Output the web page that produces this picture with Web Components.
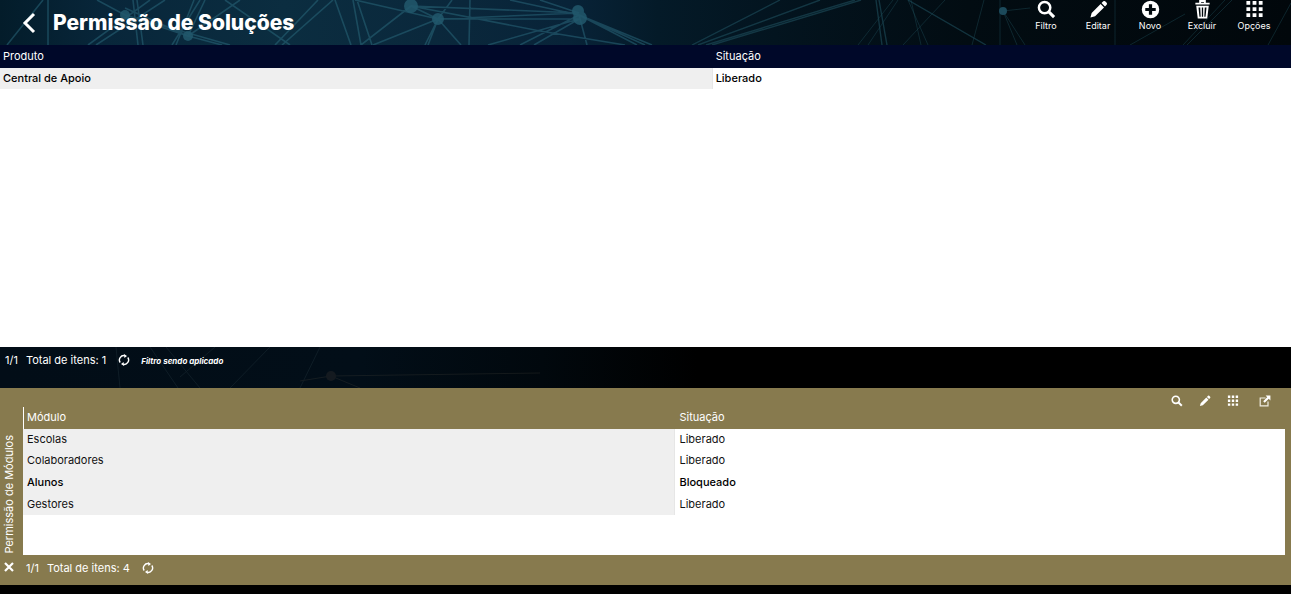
<!DOCTYPE html>
<html lang="pt-BR">
  <head>
    <meta charset="UTF-8" />
    <meta name="viewport" content="width=device-width, initial-scale=1" />
    <title>Permissão de Soluções</title>
    <style>
      body {
        margin: 0;
        background: #000;
        color: #fff;
        font-family: Inter, "Open Sans", sans-serif;
        font-size: 11px;
      }
    </style>
  </head>

  <body>
    <permission-page></permission-page>

    <template id="page--content">
      <style>
        :host {
          display: flex;
          flex-direction: column;
          box-sizing: border-box;
          min-height: 100vh;
          padding-bottom: 9px;
        }
        data-grid.main {
          flex: 1;
          --head-bg: #000829;
          --head-height: 23px;
          --cell-pad: 3px;
        }
        data-grid.modules {
          --head-height: 22px;
          --cell-pad: 4px;
          --head-line: 1px solid #fff;
          min-height: 148px;
        }
        .hint {
          font-size: 8px;
          font-style: italic;
          font-weight: 700;
        }
      </style>
      <app-header>
        <span slot="title">Permissão de Soluções</span>
        <tool-button icon="search">Filtro</tool-button>
        <tool-button icon="pencil">Editar</tool-button>
        <tool-button icon="plus">Novo</tool-button>
        <tool-button icon="trash">Excluir</tool-button>
        <tool-button icon="grid">Opções</tool-button>
      </app-header>
      <data-grid class="main" split="55.2"></data-grid>
      <page-footer art>
        <span slot="page">1/1</span>
        <span slot="total">Total de itens: 1</span>
        <span class="hint">Filtro sendo aplicado</span>
      </page-footer>
      <detail-panel>
        <span slot="title">Permissão de Módulos</span>
        <data-grid class="modules" split="51.7"></data-grid>
        <page-footer slot="footer">
          <span slot="page">1/1</span>
          <span slot="total">Total de itens: 4</span>
        </page-footer>
      </detail-panel>
    </template>

    <template id="header--content">
      <style>
        :host {
          display: flex;
          align-items: center;
          position: relative;
          height: 45px;
          overflow: hidden;
          background: linear-gradient(90deg, #031c2a 0%, #08263a 8%, #0b2d40 22%, #0a273b 36%, #082338 44%, #041a28 51%, #03141f 60%, #020c12 75%, #01070b 100%);
        }
        .art {
          position: absolute;
          left: 0;
          top: 0;
          width: 100%;
          height: 100%;
        }
        .back {
          position: relative;
          display: flex;
          padding: 0;
          margin-left: 22px;
          border: 0;
          background: none;
          color: #fff;
        }
        h1 {
          position: relative;
          flex: 1;
          margin: 0 0 0 17px;
          font-size: 21px;
          line-height: 24px;
          font-weight: 800;
        }
        nav {
          position: relative;
          align-self: flex-start;
          display: flex;
          margin-right: 11px;
        }
      </style>
      <svg class="art" viewBox="0 0 1291 45" preserveAspectRatio="xMinYMin slice" aria-hidden="true">
        <g fill="none" stroke="#2b6c7f" stroke-width="1.6" opacity=".5">
          <path d="M7 45L43 0M48 0V45M97 0L125 15L230 45M88 45L150 0M96 45L165 0M133 0L138 45M137 0L143 45M125 15L188 36L205 0M200 0L172 45M194 0L176 45M188 36L240 0M188 36L125 8M188 36L222 45M275 45L318 0M282 45L333 0M225 0L290 45" />
          <path d="M335 0L351 45M353 0L361 45M357 0L372 45M355 0L438 19M411 6L438 19M411 6L361 45M438 19L373 45M438 19L461 45M438 19L425 45M438 19L428 45M438 19L452 0M411 6L579 13M438 19L579 13M438 19L579 19M411 6L540 31L625 45M510 0L579 15M540 0L579 13M579 19L488 45M579 15L520 45M579 19L534 45M579 15L587 45M579 15L637 45M579 15L645 45M579 15L652 45M470 0L469 45" />
        </g>
        <g fill="none" stroke="#205463" stroke-width="1.4" opacity=".55">
          <path d="M692 45L780 0M698 45L820 0M706 45L855 0M712 45L861 0M876 0L882 45M879 0L887 45M908 0L986 45" />
        </g>
        <g fill="none" stroke="#1d4a55" opacity=".45">
          <path d="M858 45L893 0M868 45L898 0M908 0L928 45M911 0L921 45M903 45L945 0M984 0L972 45M1000 0V45M1003 11L1025 45M1003 11L1030 8M1003 11L1017 45M1115 0V45M1183 45L1225 0M1187 45L1232 0M1130 45L1185 14M1268 45L1291 3" />
        </g>
        <g fill="#22596d" opacity=".85">
          <circle cx="125" cy="15" r="5" /><circle cx="188" cy="36" r="5" />
          <circle cx="411" cy="6" r="7" /><circle cx="438" cy="19" r="6" />
          <circle cx="578" cy="11" r="6" /><circle cx="580" cy="18" r="7" />
        </g>
        <circle cx="1003" cy="11" r="4" fill="#1c4a5b" />
      </svg>
      <button class="back" type="button" aria-label="Voltar">
        <svg width="14" height="22" viewBox="0 0 14 22" fill="none" stroke="#fff" stroke-width="3"><path d="M12 2L3 11L12 20" /></svg>
      </button>
      <h1><slot name="title"></slot></h1>
      <nav><slot></slot></nav>
    </template>

    <template id="footer--content">
      <style>
        :host {
          display: flex;
          position: relative;
          gap: 8px;
          height: 41px;
          padding: 5px 5px 0;
          box-sizing: border-box;
          line-height: 16px;
          overflow: hidden;
        }
        :host([art]) {
          background: linear-gradient(90deg, #020d17 0%, #020e18 28%, #01080d 42%, #000 54%);
        }
        :host([slot]) {
          height: 30px;
          padding-left: 3px;
        }
        :host(:not([art])) .art {
          display: none;
        }
        .art {
          position: absolute;
          left: 0;
          top: 0;
        }
        .text {
          position: relative;
        }
        button {
          position: relative;
          display: flex;
          align-self: flex-start;
          padding: 2px;
          border: 0;
          margin: 0 1px 0 2px;
          background: none;
        }
      </style>
      <svg class="art" width="700" height="41" viewBox="0 0 700 41" fill="none" stroke="#2c4048" opacity=".3" aria-hidden="true">
        <path d="M116 0L120 41M150 0L178 41M166 0L200 41M215 0L180 30M320 0L300 41M230 41L270 0" />
        <path d="M331 29L540 26M331 29L360 41M331 29L300 34" stroke="#403f38" />
        <circle cx="331" cy="29" r="5" fill="#403733" stroke="none" />
      </svg>
      <span class="text"><slot name="page"></slot></span>
      <span class="text"><slot name="total"></slot></span>
      <button type="button" aria-label="Atualizar">
        <svg width="12" height="12" viewBox="0 0 12 12" fill="none" stroke="#fff" stroke-width="1.4">
          <path d="M2.2 8.5A4.4 4.4 0 0 1 6.8 1.7M9.8 3.5A4.4 4.4 0 0 1 5.2 10.3" />
          <path d="M6 0L9 2L6.4 4ZM6 12L3 10L5.6 8Z" fill="#fff" stroke="none" />
        </svg>
      </button>
      <span class="text"><slot></slot></span>
    </template>

    <template id="panel--content">
      <style>
        :host {
          display: grid;
          grid-template-columns: 23px 1fr;
          padding-right: 6px;
          background: #877a4e;
        }
        aside {
          display: flex;
          flex-direction: column;
          justify-content: flex-end;
          align-items: center;
          gap: 8px;
          padding: 0 6px 13px 0;
        }
        h2 {
          margin: 0;
          font-size: 11px;
          line-height: 16px;
          font-weight: 400;
          writing-mode: vertical-rl;
          transform: rotate(180deg);
          white-space: nowrap;
        }
        button {
          display: flex;
          padding: 0;
          border: 0;
          background: none;
        }
        nav {
          display: flex;
          justify-content: flex-end;
          align-items: flex-end;
          gap: 16px;
          height: 19px;
          padding-right: 14px;
          box-sizing: border-box;
        }
        nav button:last-child {
          margin-left: 4px;
        }
      </style>
      <aside>
        <h2><slot name="title"></slot></h2>
        <button type="button" aria-label="Fechar">
          <svg width="10" height="10" viewBox="0 0 10 10" stroke="#fff" stroke-width="2.2"><path d="M1 1L9 9M9 1L1 9" /></svg>
        </button>
      </aside>
      <section>
        <nav></nav>
        <slot></slot>
        <slot name="footer"></slot>
      </section>
    </template>

    <script>
      const icons = {
        search: '<circle cx="8" cy="8" r="6" fill="none" stroke="#fff" stroke-width="2.6"/><path d="M12.5 12.5L18 18" stroke="#fff" stroke-width="3.2"/>',
        pencil: '<path d="M1.5 18.5L2.8 13.6L12.2 4.2L15.8 7.8L6.4 17.2ZM13.2 3.2L15 1.4Q16 .6 17 1.4L18.6 3Q19.4 4 18.6 5L16.8 6.8Z" fill="#fff"/>',
        plus: '<path fill-rule="evenodd" d="M10 .8A9.2 9.2 0 1 0 10 19.2A9.2 9.2 0 1 0 10 .8ZM8.3 4.5H11.7V8.3H15.5V11.7H11.7V15.5H8.3V11.7H4.5V8.3H8.3Z" fill="#fff"/>',
        trash: '<path d="M2.5 3.8H17.5M7.5 3V1H12.5V3" fill="none" stroke="#fff" stroke-width="2"/><path fill-rule="evenodd" d="M3.4 6H16.6L15 19.5H5ZM5.8 8L6.8 17.5H8.1L7.6 8ZM9.3 8V17.5H10.7V8ZM12.4 8L11.9 17.5H13.2L14.2 8Z" fill="#fff"/>',
        grid: '<path d="M1.5 1H5.5V5H1.5ZM8 1H12V5H8ZM14.5 1H18.5V5H14.5ZM1.5 7.5H5.5V11.5H1.5ZM8 7.5H12V11.5H8ZM14.5 7.5H18.5V11.5H14.5ZM1.5 14H5.5V18H1.5ZM8 14H12V18H8ZM14.5 14H18.5V18H14.5Z" fill="#fff"/>',
        open: '<path d="M11 5H2V18H15V11" fill="none" stroke="#f0ede2" stroke-width="2"/><path d="M11 1H19V9L16.3 6.4L9.5 13L7 10.5L13.7 3.8Z" fill="#fff"/>',
      };

      function icon(name, size) {
        return `<svg width="${size}" height="${size}" viewBox="0 0 20 20" aria-hidden="true">${icons[name]}</svg>`;
      }

      class TemplateElement extends HTMLElement {
        constructor() {
          super();
          const template = document.getElementById(this.constructor.templateId).content;
          this.attachShadow({ mode: "open" }).appendChild(template.cloneNode(true));
        }
      }

      class AppHeader extends TemplateElement {
        static templateId = "header--content";
      }

      class PageFooter extends TemplateElement {
        static templateId = "footer--content";
      }

      class DetailPanel extends TemplateElement {
        static templateId = "panel--content";

        connectedCallback() {
          const tools = [
            ["search", "Filtro"],
            ["pencil", "Editar"],
            ["grid", "Opções"],
            ["open", "Abrir"],
          ];
          this.shadowRoot.querySelector("nav").innerHTML = tools
            .map(([name, label]) => `<button type="button" aria-label="${label}">${icon(name, 12)}</button>`)
            .join("");
        }
      }

      class ToolButton extends HTMLElement {
        constructor() {
          super();
          this.attachShadow({ mode: "open" });
        }

        connectedCallback() {
          this.shadowRoot.innerHTML = `
            <style>
              :host { display: block; width: 52px; }
              button {
                display: flex;
                flex-direction: column;
                align-items: center;
                gap: 1px;
                width: 100%;
                padding: 0;
                border: 0;
                background: none;
                color: #fff;
                font-family: inherit;
                font-size: 9px;
                line-height: 12px;
              }
            </style>
            <button type="button">${icon(this.getAttribute("icon"), 19)}<span><slot></slot></span></button>`;
        }
      }

      class DataGrid extends HTMLElement {
        constructor() {
          super();
          this.attachShadow({ mode: "open" });
        }

        // rows: [cell, cell, highlighted]
        setData(columns, rows) {
          const head = columns.map((name) => `<th scope="col">${name}</th>`).join("");
          const body = rows
            .map(([name, status, strong]) => `<tr class="${strong ? "strong" : ""}"><td>${name}</td><td>${status}</td></tr>`)
            .join("");

          this.shadowRoot.innerHTML = `
            <style>
              :host { display: block; background: #fff; color: #111; }
              table { width: 100%; border-collapse: separate; border-spacing: 0; table-layout: fixed; }
              th, td { padding: 0 var(--cell-pad) 2px; text-align: left; line-height: 16px; box-sizing: border-box; }
              th { height: var(--head-height); background: var(--head-bg, #877a4e); color: #fff; font-weight: 400; }
              th:first-child { width: ${this.getAttribute("split")}%; border-left: var(--head-line, 0); padding-left: 3px; }
              td { height: 21px; }
              td:first-child { background: #efefef; border-right: 1px solid #e6e6e6; }
              .strong td { font-weight: 500; color: #000; }
              .strong:not(:first-child) td { height: 23px; }
            </style>
            <table>
              <thead><tr>${head}</tr></thead>
              <tbody>${body}</tbody>
            </table>`;
        }
      }

      class PermissionPage extends TemplateElement {
        static templateId = "page--content";

        connectedCallback() {
          customElements.upgrade(this.shadowRoot);
          this.shadowRoot.querySelector(".main").setData(["Produto", "Situação"], [["Central de Apoio", "Liberado", true]]);
          this.shadowRoot.querySelector(".modules").setData(
            ["Módulo", "Situação"],
            [
              ["Escolas", "Liberado"],
              ["Colaboradores", "Liberado"],
              ["Alunos", "Bloqueado", true],
              ["Gestores", "Liberado"],
            ]
          );
        }
      }

      customElements.define("tool-button", ToolButton);
      customElements.define("app-header", AppHeader);
      customElements.define("data-grid", DataGrid);
      customElements.define("page-footer", PageFooter);
      customElements.define("detail-panel", DetailPanel);
      customElements.define("permission-page", PermissionPage);
    </script>
  </body>
</html>
